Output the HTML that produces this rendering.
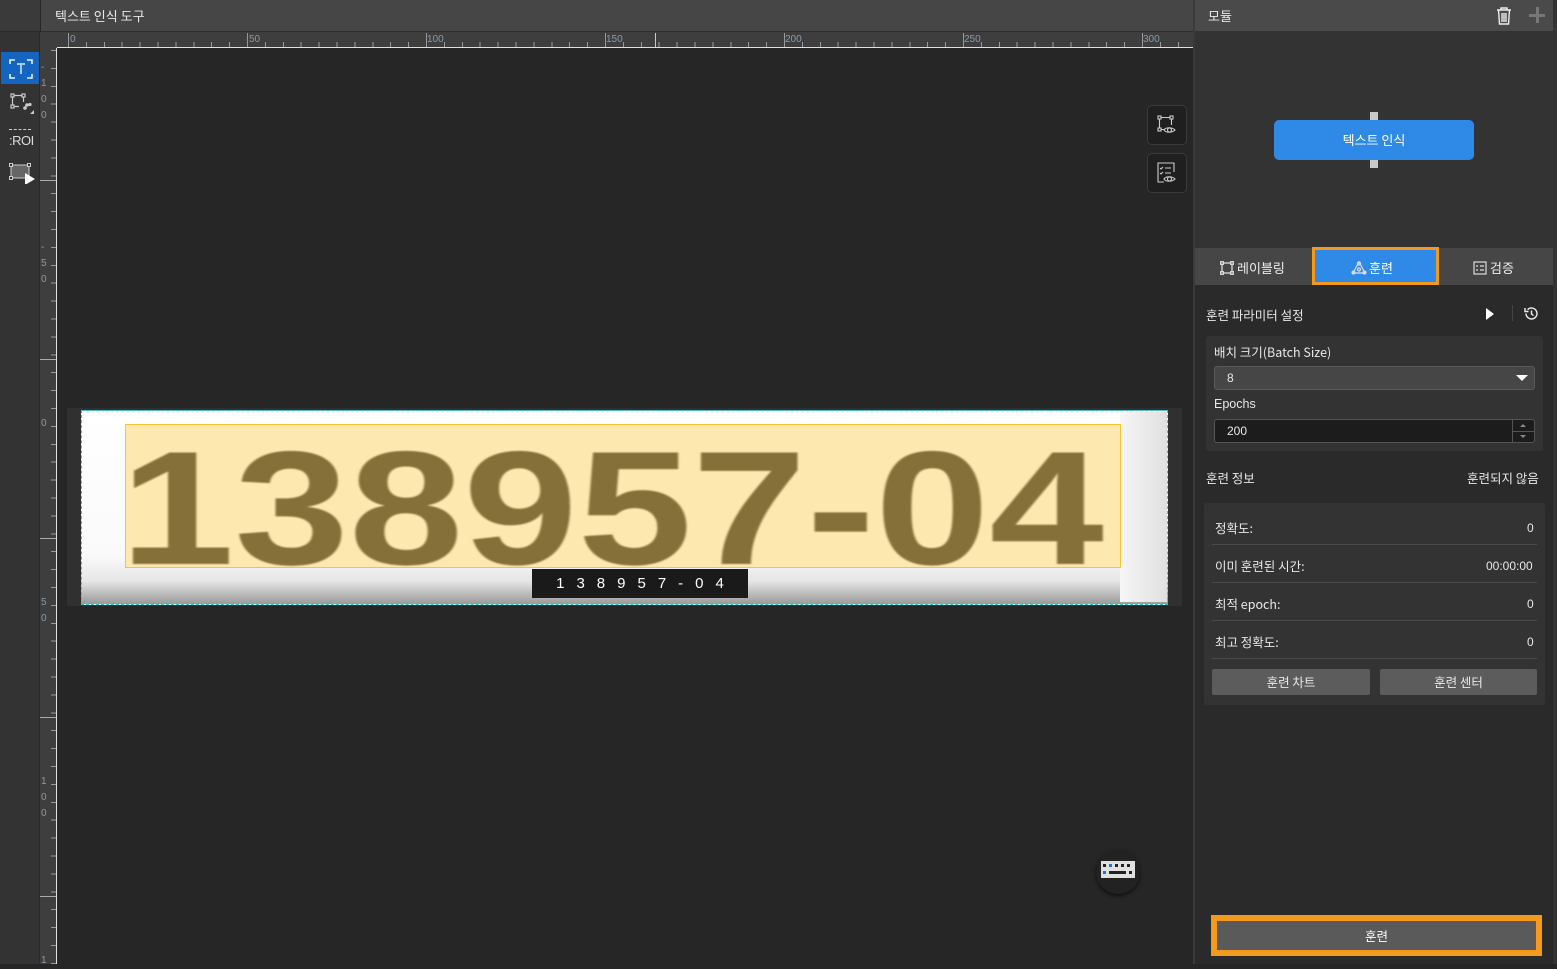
<!DOCTYPE html>
<html><head><meta charset="utf-8"><style>
*{margin:0;padding:0;box-sizing:border-box}
body{width:1557px;height:964px;background:#262626;font-family:"Liberation Sans","Noto Sans CJK KR",sans-serif;color:#e8e8e8;font-size:12px;position:relative;overflow:hidden}
.a{position:absolute}
.kr{font-family:"Noto Sans CJK KR","Liberation Sans",sans-serif}
</style></head><body>
<div class="a" style="left:0;top:0;width:40px;height:964px;background:#333;border-right:1px solid #2a2a2a"></div>
<div class="a" style="left:0;top:0;width:40px;height:32px;background:#3a3a3a;border-bottom:1px solid #2a2a2a"></div>
<div class="a" style="left:1px;top:52px;width:38px;height:32px;background:#1565c0"></div>
<svg class="a" style="left:8px;top:58px" width="26" height="22" viewBox="0 0 26 22" fill="none" stroke="#e8f0ff" stroke-width="1.6"><path d="M2 6V2h5M19 2h5v4M2 16v4h5M19 20h5v-4"/><path d="M9 6h8M13 6v10" stroke="#a9c9f5" stroke-width="2"/></svg>
<svg class="a" style="left:8px;top:91px" width="28" height="24" viewBox="0 0 28 24" fill="none" stroke="#ccc" stroke-width="1.2"><rect x="3" y="3" width="3" height="3"/><rect x="14" y="3" width="3" height="3"/><rect x="3" y="14" width="3" height="3"/><path d="M6 4.5h8M4.5 6v8M15.5 6v5M6 15.5h5"/><circle cx="19" cy="14" r="1.2" fill="#ccc"/><circle cx="22" cy="13.5" r="1" fill="#ccc"/><circle cx="17" cy="17" r="1.2" fill="#ccc"/><path d="M26 19v4h-4z" fill="#ccc" stroke="none"/></svg>
<div class="a" style="left:9px;top:129px;width:22px;height:1px;border-top:1px dashed #ccc"></div>
<div class="a" style="left:9px;top:133px;font-size:13px;color:#ddd;letter-spacing:-0.5px">:ROI</div>
<svg class="a" style="left:8px;top:162px" width="28" height="22" viewBox="0 0 28 22"><rect x="3" y="3" width="18" height="13" fill="#666" stroke="#ccc" stroke-width="1"/><rect x="1.5" y="1.5" width="3" height="3" fill="#333" stroke="#ccc"/><rect x="19.5" y="1.5" width="3" height="3" fill="#333" stroke="#ccc"/><rect x="1.5" y="14.5" width="3" height="3" fill="#333" stroke="#ccc"/><path d="M17 11l10 6-10 6z" fill="#fff"/></svg>
<div class="a kr" style="left:41px;top:0;width:1154px;height:32px;background:#464646;border-bottom:1px solid #2e2e2e;font-size:13px;line-height:32px;padding-left:14px">텍스트 인식 도구</div>
<div class="a" style="left:40px;top:32px;width:1153px;height:16px;background:#3e3e3e"></div>
<div class="a" style="left:57px;top:47px;width:1136px;height:1px;background:#e0e0e0"></div>
<div class="a" style="left:68px;top:42px;width:1125px;height:5px;background:repeating-linear-gradient(90deg,#999 0 1px,transparent 1px 17.9px)"></div>
<div class="a" style="left:68px;top:33px;width:1125px;height:14px;background:repeating-linear-gradient(90deg,#999 0 1px,transparent 1px 179px)"></div>
<div class="a" style="left:655px;top:33px;width:1px;height:14px;background:#ccc"></div>
<div class="a" style="left:70px;top:34px;font-size:10px;color:#8a9ab0;width:1200px">
<span class="a" style="left:0">0</span><span class="a" style="left:179px">50</span><span class="a" style="left:357px">100</span><span class="a" style="left:536px">150</span><span class="a" style="left:715px">200</span><span class="a" style="left:894px">250</span><span class="a" style="left:1073px">300</span></div>
<div class="a" style="left:40px;top:48px;width:17px;height:916px;background:#3e3e3e"></div>
<div class="a" style="left:56px;top:48px;width:1px;height:916px;background:#e0e0e0"></div>
<div class="a" style="left:51px;top:50px;width:5px;height:914px;background:repeating-linear-gradient(180deg,#999 0 1px,transparent 1px 17.9px)"></div>
<div class="a" style="left:40px;top:50px;width:16px;height:914px;background:repeating-linear-gradient(180deg,transparent 0 130px,#aaa 130px 131px,transparent 131px 179px)"></div>
<div class="a" style="left:41px;top:60px;font-size:10px;color:#8a9ab0;line-height:16px;width:10px">
<div class="a" style="top:0">-<br>1<br>0<br>0</div><div class="a" style="top:180px">-<br>5<br>0</div><div class="a" style="top:356px">0</div><div class="a" style="top:535px">5<br>0</div><div class="a" style="top:714px">1<br>0<br>0</div><div class="a" style="top:893px">1</div></div>
<div class="a" style="left:67px;top:408px;width:1115px;height:198px;background:#303030"></div>
<div class="a" style="left:81px;top:410px;width:1087px;height:195px;background:linear-gradient(180deg,#fff 0,#fafafa 75%,#e6e6e6 88%,#9a9a9a 100%);border:1px dashed #1ed0d0"></div>
<div class="a" style="left:1120px;top:412px;width:47px;height:190px;background:linear-gradient(90deg,#f6f6f6,#e0e0e0)"></div>
<div class="a" style="left:125px;top:424px;width:996px;height:144px;background:#fde9b0;border:1px solid #f7c530"></div>
<div class="a" style="left:120px;top:424px;width:1010px;height:160px;font-family:'Liberation Sans',sans-serif;font-weight:bold;font-size:162px;line-height:170px;color:#86703a;letter-spacing:0;transform:scaleX(1.27);transform-origin:left;filter:blur(0.8px);white-space:nowrap">138957-04</div>
<div class="a" style="left:532px;top:569px;width:216px;height:29px;background:#1a1a1a;color:#fff;font-size:15px;line-height:29px;text-align:center;letter-spacing:12px;padding-left:12px">138957-04</div>
<div class="a" style="left:1147px;top:105px;width:40px;height:40px;background:#1f1f1f;border:1px solid #3a3a3a;border-radius:5px"></div>
<svg class="a" style="left:1155px;top:114px" width="28" height="24" viewBox="0 0 28 24" fill="none" stroke="#ccc" stroke-width="1.1"><rect x="3" y="2" width="3" height="3"/><rect x="15" y="2" width="3" height="3"/><rect x="3" y="14" width="3" height="3"/><path d="M6 3.5h9M4.5 5v9M16.5 5v6M6 15.5h3"/><path d="M9 16c2-3 8-3 11 0c-3 3-9 3-11 0z"/><circle cx="14.5" cy="16" r="2"/></svg>
<div class="a" style="left:1147px;top:153px;width:40px;height:40px;background:#1f1f1f;border:1px solid #3a3a3a;border-radius:5px"></div>
<svg class="a" style="left:1155px;top:161px" width="28" height="26" viewBox="0 0 28 26" fill="none" stroke="#ccc" stroke-width="1.1"><path d="M9 21H3V2h16v9"/><path d="M5 7l1 1 2-2M10 7h6M5 12l1 1 2-2M10 12h6"/><path d="M9 18c2-3 8-3 11 0c-3 3-9 3-11 0z"/><circle cx="14.5" cy="18" r="2"/></svg>
<div class="a" style="left:1096px;top:850px;width:44px;height:44px;border-radius:50%;background:#222;box-shadow:0 2px 4px rgba(0,0,0,.6)"></div>
<svg class="a" style="left:1100px;top:860px" width="36" height="20" viewBox="0 0 36 20"><rect x="1" y="1" width="34" height="17" fill="#e0e0e0"/><g fill="#222"><rect x="3" y="4" width="3" height="3"/><rect x="15" y="4" width="3" height="3"/><rect x="21" y="4" width="3" height="3"/><rect x="27" y="4" width="3" height="3"/><rect x="9" y="11" width="17" height="3"/><rect x="29" y="11" width="3" height="3"/></g><rect x="9" y="4" width="3" height="3" fill="#1a73e8"/><rect x="3" y="11" width="3" height="3" fill="#1a73e8"/></svg>
<div class="a" style="left:1193px;top:0;width:2px;height:964px;background:#3a3a3a"></div>
<div class="a" style="left:1195px;top:0;width:362px;height:964px;background:#2a2a2a"></div>
<div class="a kr" style="left:1195px;top:0;width:358px;height:31px;background:#4a4a4a;font-size:13px;line-height:31px;padding-left:13px">모듈</div>
<svg class="a" style="left:1495px;top:6px" width="18" height="19" viewBox="0 0 18 19" fill="none" stroke="#eee" stroke-width="1.4"><path d="M2 4h14M6 4V2h6v2M3.5 4l1 14h9l1-14M7 7v9M9 7v9M11 7v9"/></svg>
<div class="a" style="left:1529px;top:14px;width:16px;height:3px;background:#777"></div>
<div class="a" style="left:1536px;top:7px;width:3px;height:16px;background:#777"></div>
<div class="a" style="left:1195px;top:31px;width:358px;height:217px;background:#333"></div>
<div class="a" style="left:1553px;top:0;width:4px;height:964px;background:#333"></div>
<div class="a" style="left:1370px;top:112px;width:8px;height:56px;background:#c8c8c8"></div>
<div class="a kr" style="left:1274px;top:120px;width:200px;height:40px;background:#2e8ae6;border-radius:5px;font-size:13px;line-height:40px;text-align:center;color:#fff">텍스트 인식</div>
<div class="a" style="left:1195px;top:248px;width:358px;height:37px;background:#464646"></div>
<div class="a kr" style="left:1220px;top:258px;font-size:13px;color:#eee">
<svg width="14" height="14" viewBox="0 0 14 14" fill="none" stroke="#ddd" stroke-width="1.3" style="vertical-align:-2px;margin-right:3px"><rect x="2" y="2" width="10" height="10"/><rect x="0.7" y="0.7" width="2.6" height="2.6" fill="#464646"/><rect x="10.7" y="0.7" width="2.6" height="2.6" fill="#464646"/><rect x="0.7" y="10.7" width="2.6" height="2.6" fill="#464646"/><rect x="10.7" y="10.7" width="2.6" height="2.6" fill="#464646"/></svg>레이블링</div>
<div class="a" style="left:1312px;top:247px;width:127px;height:38px;border:3px solid #f39a1e;background:#2e8ae6"></div>
<div class="a kr" style="left:1351px;top:258px;font-size:13px;color:#fff">
<svg width="16" height="14" viewBox="0 0 16 14" fill="none" stroke="#dde" stroke-width="1.2" style="vertical-align:-2px;margin-right:2px"><path d="M8 1L2 12h12z"/><circle cx="8" cy="2.5" r="1.5"/><circle cx="2.5" cy="11.5" r="1.5"/><circle cx="13.5" cy="11.5" r="1.5"/><circle cx="8" cy="8.5" r="1.5"/></svg>훈련</div>
<div class="a kr" style="left:1473px;top:258px;font-size:13px;color:#eee">
<svg width="14" height="14" viewBox="0 0 14 14" fill="none" stroke="#ddd" stroke-width="1.2" style="vertical-align:-2px;margin-right:3px"><rect x="1" y="1" width="12" height="12"/><path d="M3 5h2M7 5h4M3 9h2M7 9h4"/></svg>검증</div>
<div class="a kr" style="left:1206px;top:305px;font-size:12.5px">훈련 파라미터 설정</div>
<div class="a" style="left:1486px;top:308px;width:0;height:0;border-left:8px solid #fff;border-top:6px solid transparent;border-bottom:6px solid transparent"></div>
<div class="a" style="left:1512px;top:305px;width:1px;height:16px;background:#444"></div>
<svg class="a" style="left:1523px;top:306px" width="16" height="15" viewBox="0 0 16 15" fill="none" stroke="#eee" stroke-width="1.4"><path d="M3 7.5a5.5 5.5 0 1 0 1.6-3.9"/><path d="M2 2v3.5h3.5"/><path d="M8.5 4.5v3.5l2 1.5"/></svg>
<div class="a" style="left:1206px;top:336px;width:337px;height:115px;background:#333;border-radius:3px"></div>
<div class="a kr" style="left:1214px;top:342px;font-size:12.5px">배치 크기(Batch Size)</div>
<div class="a" style="left:1214px;top:366px;width:321px;height:24px;background:#464646;border:1px solid #5a5a5a;border-radius:3px;font-size:12px;line-height:22px;padding-left:12px">8</div>
<div class="a" style="left:1516px;top:375px;width:0;height:0;border-top:6px solid #fff;border-left:6px solid transparent;border-right:6px solid transparent"></div>
<div class="a" style="left:1214px;top:397px;font-size:12.5px">Epochs</div>
<div class="a" style="left:1214px;top:419px;width:321px;height:24px;background:#1c1c1c;border:1px solid #555;border-radius:3px;font-size:12px;line-height:22px;padding-left:12px">200</div>
<div class="a" style="left:1512px;top:420px;width:1px;height:22px;background:#555"></div>
<div class="a" style="left:1512px;top:431px;width:22px;height:1px;background:#555"></div>
<div class="a" style="left:1520px;top:424px;border-bottom:3px solid #888;border-left:3px solid transparent;border-right:3px solid transparent"></div>
<div class="a" style="left:1520px;top:435px;border-top:3px solid #888;border-left:3px solid transparent;border-right:3px solid transparent"></div>
<div class="a kr" style="left:1206px;top:468px;font-size:12.5px">훈련 정보</div>
<div class="a kr" style="left:1467px;top:468px;font-size:12.5px">훈련되지 않음</div>
<div class="a" style="left:1204px;top:503px;width:341px;height:202px;background:#333;border-radius:3px"></div>
<div class="a kr" style="left:1215px;top:518px;font-size:12.5px">정확도:</div><div class="a" style="left:1527px;top:521px;font-size:12px">0</div>
<div class="a" style="left:1212px;top:544px;width:325px;height:1px;background:#4a4a4a"></div>
<div class="a kr" style="left:1215px;top:556px;font-size:12.5px">이미 훈련된 시간:</div><div class="a" style="left:1486px;top:559px;font-size:12px">00:00:00</div>
<div class="a" style="left:1212px;top:582px;width:325px;height:1px;background:#4a4a4a"></div>
<div class="a kr" style="left:1215px;top:594px;font-size:12.5px">최적 epoch:</div><div class="a" style="left:1527px;top:597px;font-size:12px">0</div>
<div class="a" style="left:1212px;top:620px;width:325px;height:1px;background:#4a4a4a"></div>
<div class="a kr" style="left:1215px;top:632px;font-size:12.5px">최고 정확도:</div><div class="a" style="left:1527px;top:635px;font-size:12px">0</div>
<div class="a" style="left:1212px;top:658px;width:325px;height:1px;background:#4a4a4a"></div>
<div class="a kr" style="left:1212px;top:669px;width:158px;height:26px;background:#5c5c5c;border-radius:2px;text-align:center;line-height:26px;font-size:12.5px">훈련 차트</div>
<div class="a kr" style="left:1380px;top:669px;width:157px;height:26px;background:#5c5c5c;border-radius:2px;text-align:center;line-height:26px;font-size:12.5px">훈련 센터</div>
<div class="a kr" style="left:1211px;top:915px;width:331px;height:41px;border:6px solid #f39a1e;background:#5a5a5a;text-align:center;line-height:29px;font-size:12.5px;color:#fff">훈련</div>
</body></html>
